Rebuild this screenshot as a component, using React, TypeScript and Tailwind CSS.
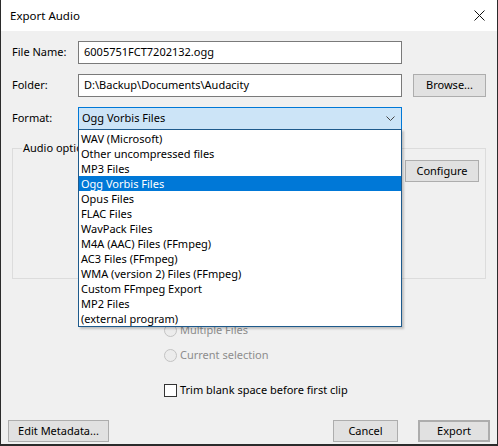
import React from "react";

const formats = [
  "WAV (Microsoft)",
  "Other uncompressed files",
  "MP3 Files",
  "Ogg Vorbis Files",
  "Opus Files",
  "FLAC Files",
  "WavPack Files",
  "M4A (AAC) Files (FFmpeg)",
  "AC3 Files (FFmpeg)",
  "WMA (version 2) Files (FFmpeg)",
  "Custom FFmpeg Export",
  "MP2 Files",
  "(external program)",
];

function Btn({ children, className = "" }: { children: React.ReactNode; className?: string }) {
  return (
    <div
      className={
        "h-[22px] flex items-center justify-center bg-[#e1e1e1] border border-[#adadad] text-black " +
        className
      }
    >
      {children}
    </div>
  );
}

export default function App() {
  return (
    <div className="w-[498px] h-[446px] bg-[#2b2b2b] px-px pb-[2px] flex flex-col font-['Noto_Sans',sans-serif] text-[11px] text-black">
      {/* Title bar */}
      <div className="h-[31px] bg-white flex items-center justify-between pl-[9px] pr-[12px] shrink-0">
        <span className="text-[11.5px]">Export Audio</span>
        <svg width="11" height="11" viewBox="0 0 11 11" className="block">
          <path d="M0.5 0.5 L10.5 10.5 M10.5 0.5 L0.5 10.5" stroke="#111" strokeWidth="1" />
        </svg>
      </div>

      {/* Body */}
      <div className="flex-1 bg-[#f0f0f0] relative flex flex-col">
        <div className="flex flex-col px-[11px] pt-[10px]">
          <div className="flex items-center h-[23px]">
            <span className="w-[66px]">File Name:</span>
            <div className="w-[324px] h-[23px] bg-white border border-[#7a7a7a] flex items-center pl-[5px]">
              6005751FCT7202132.ogg
            </div>
          </div>
          <div className="flex items-center h-[23px] mt-[10px]">
            <span className="w-[66px]">Folder:</span>
            <div className="w-[324px] h-[23px] bg-white border border-[#7a7a7a] flex items-center pl-[5px]">
              D:\Backup\Documents\Audacity
            </div>
            <Btn className="ml-[11px] w-[73px] h-[23px]">Browse...</Btn>
          </div>
          <div className="flex items-center h-[23px] mt-[10px]">
            <span className="w-[66px]">Format:</span>
            <div className="w-[324px] h-[23px] bg-[#cce4f7] border border-[#0078d7] flex items-center justify-between pl-[3px] pr-[6px]">
              <span>Ogg Vorbis Files</span>
              <svg width="9" height="5" viewBox="0 0 9 5" className="block">
                <path d="M0.5 0.5 L4.5 4.5 L8.5 0.5" stroke="#444" strokeWidth="1" fill="none" />
              </svg>
            </div>
          </div>

          {/* Audio options group */}
          <div className="relative mt-[18px] h-[131px] border border-[#dcdcdc] flex justify-end pt-[11px] pr-[6px]">
            <span className="absolute -top-[9px] left-[9px] w-[56px] overflow-hidden whitespace-nowrap bg-[#f0f0f0] pl-px">
              Audio options
            </span>
            <Btn className="w-[74px]">Configure</Btn>
          </div>
        </div>

        {/* Radios & checkbox */}
        <div className="flex flex-col pl-[163px] mt-[39px]">
          <div className="flex items-center h-[25px] gap-[3px] text-[#8d8d8d]">
            <span className="w-[13px] h-[13px] rounded-full border border-[#c3c3c3] bg-[#ececec]" />
            <span>Multiple Files</span>
          </div>
          <div className="flex items-center h-[25px] gap-[3px] text-[#8d8d8d]">
            <span className="w-[13px] h-[13px] rounded-full border border-[#c3c3c3] bg-[#ececec]" />
            <span>Current selection</span>
          </div>
          <div className="flex items-center h-[24px] gap-[3px] mt-[10px]">
            <span className="w-[13px] h-[13px] border border-[#333] bg-white" />
            <span>Trim blank space before first clip</span>
          </div>
        </div>

        {/* Bottom buttons */}
        <div className="mt-auto flex items-center pl-[7px] pr-[7px] pb-[2px]">
          <Btn className="w-[101px]">Edit Metadata...</Btn>
          <div className="flex-1" />
          <Btn className="w-[65px]">Cancel</Btn>
          <Btn className="w-[72px] ml-[20px] border-2 border-[#0078d7]">Export</Btn>
        </div>

        {/* Open dropdown list */}
        <div className="absolute left-[77px] top-[98px] w-[324px] h-[198px] bg-white border border-[#1e5a8c] pt-px shadow-[2px_2px_2px_rgba(0,0,0,0.2)]">
          {formats.map((f) => (
            <div
              key={f}
              className={
                "h-[15px] leading-[15px] pl-[2px] whitespace-nowrap " +
                (f === "Ogg Vorbis Files" ? "bg-[#0078d7] text-white" : "text-black")
              }
            >
              {f}
            </div>
          ))}
        </div>
      </div>
    </div>
  );
}
